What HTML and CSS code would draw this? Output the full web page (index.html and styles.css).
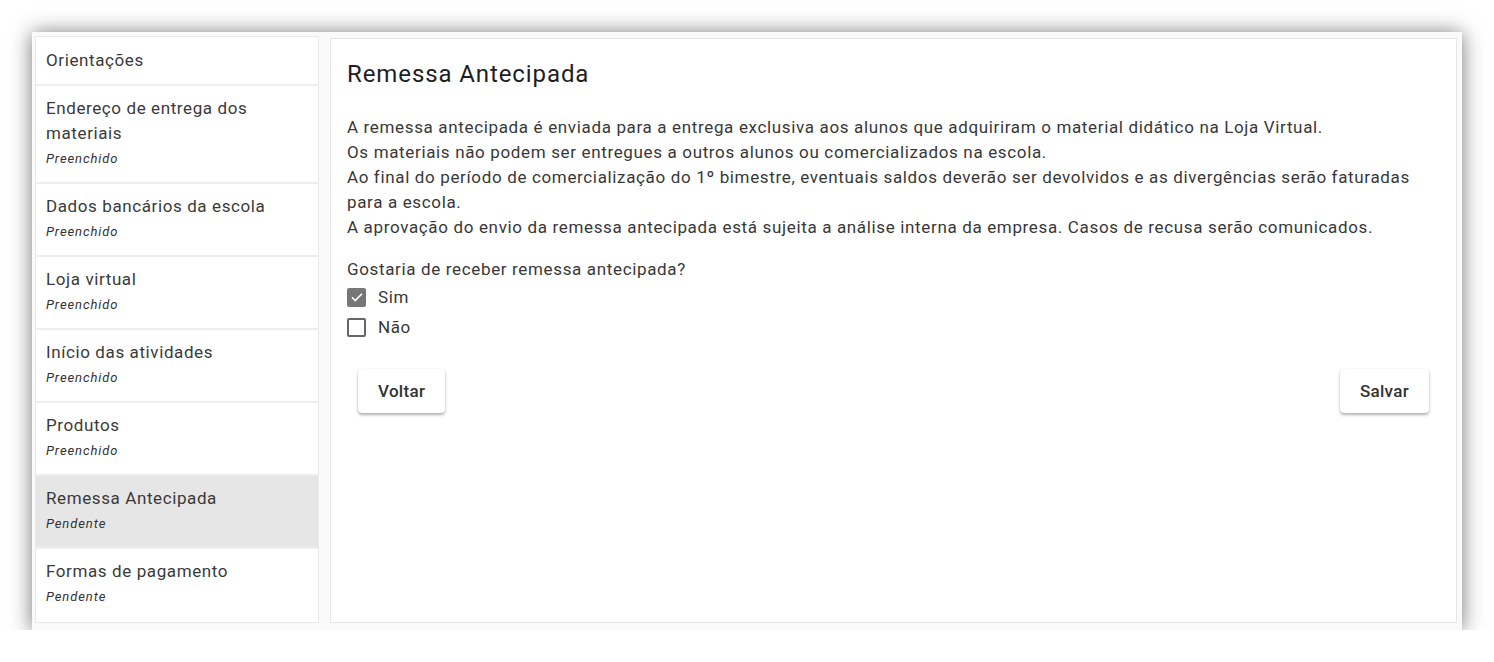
FILE: index.html
```html
<!DOCTYPE html>
<html lang="pt-BR">
<head>
<meta charset="utf-8">
<title>Remessa Antecipada</title>
<link rel="stylesheet" href="styles.css">
</head>
<body>
<div class="frame">
  <nav class="sidebar">
    <div class="item single"><div class="item-title">Orientações</div></div>
    <div class="item"><div class="item-title">Endereço de entrega dos materiais</div><div class="item-sub">Preenchido</div></div>
    <div class="item"><div class="item-title">Dados bancários da escola</div><div class="item-sub">Preenchido</div></div>
    <div class="item"><div class="item-title">Loja virtual</div><div class="item-sub">Preenchido</div></div>
    <div class="item"><div class="item-title">Início das atividades</div><div class="item-sub">Preenchido</div></div>
    <div class="item"><div class="item-title">Produtos</div><div class="item-sub">Preenchido</div></div>
    <div class="item active"><div class="item-title">Remessa Antecipada</div><div class="item-sub">Pendente</div></div>
    <div class="item last"><div class="item-title">Formas de pagamento</div><div class="item-sub">Pendente</div></div>
  </nav>
  <main class="content">
    <h2 class="title">Remessa Antecipada</h2>
    <p class="text">A remessa antecipada é enviada para a entrega exclusiva aos alunos que adquiriram o material didático na Loja Virtual.<br>Os materiais não podem ser entregues a outros alunos ou comercializados na escola.<br>Ao final do período de comercialização do 1º bimestre, eventuais saldos deverão ser devolvidos e as divergências serão faturadas para a escola.<br>A aprovação do envio da remessa antecipada está sujeita a análise interna da empresa. Casos de recusa serão comunicados.</p>
    <p class="question">Gostaria de receber remessa antecipada?</p>
    <label class="check">
      <span class="box checked"><svg viewBox="0 0 18 18" width="18" height="18"><path d="M4 9.3l3.2 3.2L14 5.7" fill="none" stroke="#fff" stroke-width="1.6"/></svg></span>
      <span class="check-label">Sim</span>
    </label>
    <label class="check">
      <span class="box"></span>
      <span class="check-label">Não</span>
    </label>
    <div class="actions">
      <button class="btn">Voltar</button>
      <button class="btn">Salvar</button>
    </div>
  </main>
</div>
</body>
</html>
```
FILE: styles.css
```css
html, body {
  margin: 0;
  padding: 0;
  background: #ffffff;
}
body {
  padding: 32px 32px 0 32px;
  font-family: Roboto, "Liberation Sans", Arial, sans-serif;
  color: #333333;
}
.frame {
  width: 1430px;
  height: 598px;
  box-sizing: border-box;
  background: #fafafa;
  box-shadow: 0 1px 20px rgba(0, 0, 0, 0.55);
  display: flex;
  align-items: flex-start;
  padding: 4px 5px 7px 3px;
  gap: 11px;
}
.sidebar {
  width: 284px;
  box-sizing: border-box;
  height: 587px;
  border: 1px solid #eaeaea;
  background: #ffffff;
  display: flex;
  flex-direction: column;
}
.item {
  padding: 10px 10px 13px 10px;
  border-bottom: 2px solid #eeeeee;
}
.item.single {
  padding: 11px 10px 11px 10px;
}
.item.last {
  border-bottom: none;
}
.item.active {
  background: #e6e6e6;
}
.item-title {
  font-size: 17px;
  line-height: 25px;
  letter-spacing: 0.6px;
  color: #3a3a3a;
}
.item-sub {
  font-size: 13px;
  line-height: 20px;
  margin-top: 3px;
  letter-spacing: 0.9px;
  font-style: italic;
  color: #333333;
}
.content {
  flex: 1;
  height: 585px;
  margin-top: 2px;
  box-sizing: border-box;
  border: 1px solid #e6e6e6;
  background: #ffffff;
  padding: 21px 16px 0 16px;
}
.title {
  margin: 0;
  font-size: 24px;
  line-height: 28px;
  font-weight: 400;
  letter-spacing: 0.9px;
  color: #1e1e1e;
}
.text {
  margin: 27px 0 0 0;
  font-size: 17px;
  line-height: 25px;
  letter-spacing: 0.65px;
  color: #383838;
}
.question {
  margin: 17px 0 0 0;
  font-size: 17px;
  line-height: 25px;
  letter-spacing: 0.65px;
  color: #383838;
}
.check {
  display: flex;
  align-items: center;
  height: 30px;
  gap: 12px;
}
.box {
  width: 19px;
  height: 19px;
  box-sizing: border-box;
  border: 2px solid #666666;
  border-radius: 2px;
  display: flex;
  align-items: center;
  justify-content: center;
}
.box.checked {
  border: none;
  background: #767676;
}
.check-label {
  font-size: 17px;
  letter-spacing: 0.6px;
  color: #383838;
}
.actions {
  display: flex;
  justify-content: space-between;
  margin-top: 27px;
  padding: 0 11px;
}
.btn {
  height: 44px;
  padding: 0 20px;
  border: none;
  border-radius: 4px;
  background: #ffffff;
  font-family: Roboto, "Liberation Sans", Arial, sans-serif;
  font-size: 17px;
  font-weight: 500;
  letter-spacing: 0.3px;
  color: #333333;
  box-shadow: 0 2px 3px rgba(0, 0, 0, 0.3), 0 0 1px rgba(0, 0, 0, 0.12);
}
```
